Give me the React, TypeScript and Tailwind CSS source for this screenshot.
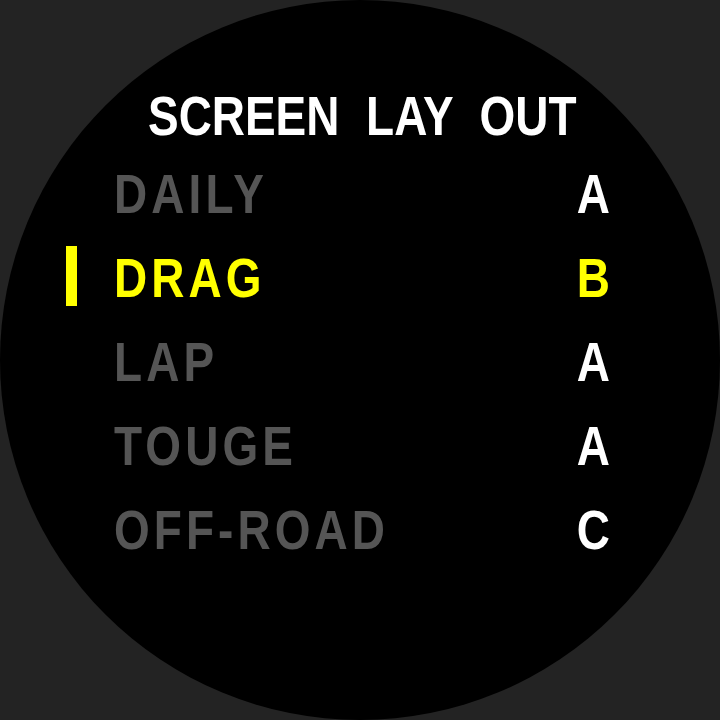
const rows = [
  { name: "DAILY", value: "A" },
  { name: "DRAG", value: "B" },
  { name: "LAP", value: "A" },
  { name: "TOUGE", value: "A" },
  { name: "OFF-ROAD", value: "C" },
];

const selected = 1;

export default function App() {
  return (
    <div className="flex h-[720px] w-[720px] items-center justify-center bg-[#232323] font-['Liberation_Sans',Arial,sans-serif] font-bold">
      <div className="h-[720px] w-[720px] rounded-full bg-black pt-[80px]">
        <h1 className="pl-[4px] text-center text-[56px] leading-[72px] text-white">
          <span className="inline-block scale-x-[0.82] [word-spacing:17px]">SCREEN LAY OUT</span>
        </h1>
        <ul>
          {rows.map((row, i) => {
            const active = i === selected;
            return (
              <li key={row.name} className="flex h-[84px] items-center text-[56px] leading-[84px]">
                <div className="ml-[66px] w-[11px]">
                  {active && <div className="-mt-[4px] h-[60px] w-[11px] bg-[#ffff00]" />}
                </div>
                <div className="ml-[37px] flex-1">
                  <span
                    className={
                      active
                        ? "inline-block origin-left scale-x-[0.82] tracking-[5px] text-[#ffff00]"
                        : "inline-block origin-left scale-x-[0.82] tracking-[5px] text-[#555555]"
                    }
                  >
                    {row.name}
                  </span>
                </div>
                <div className="mr-[102px] w-[50px] text-center">
                  <span
                    className={
                      active
                        ? "inline-block scale-x-[0.82] text-[#ffff00]"
                        : "inline-block scale-x-[0.82] text-white"
                    }
                  >
                    {row.value}
                  </span>
                </div>
              </li>
            );
          })}
        </ul>
      </div>
    </div>
  );
}
